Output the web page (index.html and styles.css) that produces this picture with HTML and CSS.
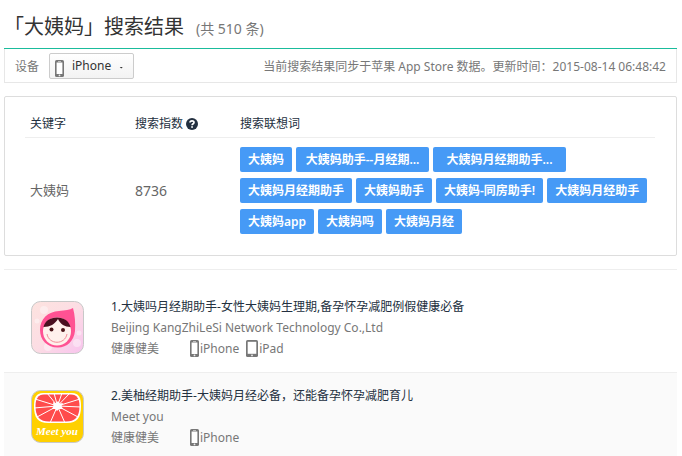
FILE: index.html
```html
<!DOCTYPE html>
<html lang="zh-CN">
<head>
    <meta charset="utf-8">
    <title>大姨妈 搜索结果</title>
    <link rel="stylesheet" href="styles.css">
</head>
<body>
    <svg class="sprite">
        <symbol id="phone" viewBox="0 0 9 17">
            <rect width="9" height="17" rx="1.6" fill="#777"/>
            <rect x="1.6" y="2.5" width="5.8" height="11.5" fill="#fff"/>
            <rect x="3" y="1" width="3" height="0.7" fill="#ddd"/>
            <circle cx="4.5" cy="15.4" r="0.9" fill="#eee"/>
        </symbol>
        <symbol id="tablet" viewBox="0 0 12 17">
            <rect width="12" height="17" rx="1.6" fill="#777"/>
            <rect x="1.7" y="1.8" width="8.6" height="12" fill="#fff"/>
            <circle cx="6" cy="15.4" r="0.9" fill="#eee"/>
        </symbol>
    </svg>

    <h1 class="page-title">「大姨妈」搜索结果<small>(共 510 条)</small></h1>

    <div class="toolbar">
        <span>设备</span>
        <button class="device-btn" type="button">
            <svg class="icon-phone"><use href="#phone"/></svg>
            iPhone
            <i class="caret"></i>
        </button>
        <span class="updated">当前搜索结果同步于苹果 App Store 数据。更新时间：2015-08-14 06:48:42</span>
    </div>

    <div class="panel">
        <table class="keywords">
            <thead>
                <tr>
                    <th class="col-key">关键字</th>
                    <th class="col-index">搜索指数
                        <svg class="icon-help" viewBox="0 0 12 12">
                            <circle cx="6" cy="6" r="6" fill="#233040"/>
                            <path d="M4 4.5C4.1 2.3 8 2.3 8 4.4C8 5.8 6.1 5.7 6.1 7.3" fill="none" stroke="#fff" stroke-width="1.7"/>
                            <rect x="5.2" y="8.2" width="1.7" height="1.6" fill="#fff"/>
                        </svg>
                    </th>
                    <th>搜索联想词</th>
                </tr>
            </thead>
            <tbody>
                <tr>
                    <td>大姨妈</td>
                    <td class="index">8736</td>
                    <td>
                        <div class="tags">
                            <a class="tag" href="#">大姨妈</a>
                            <a class="tag tag-long" href="#">大姨妈助手--月经期...</a>
                            <a class="tag tag-long" href="#">大姨妈月经期助手...</a>
                            <a class="tag" href="#">大姨妈月经期助手</a>
                            <a class="tag" href="#">大姨妈助手</a>
                            <a class="tag" href="#">大姨妈-同房助手!</a>
                            <a class="tag" href="#">大姨妈月经助手</a>
                            <a class="tag" href="#">大姨妈app</a>
                            <a class="tag" href="#">大姨妈吗</a>
                            <a class="tag" href="#">大姨妈月经</a>
                        </div>
                    </td>
                </tr>
            </tbody>
        </table>
    </div>

    <div class="app-list">
        <div class="app">
            <svg class="app-icon" viewBox="0 0 53 53">
                <defs>
                    <linearGradient id="pink" x1="0" y1="0" x2="1" y2="1">
                        <stop offset="0" stop-color="#fde3df"/>
                        <stop offset="0.5" stop-color="#fcdde4"/>
                        <stop offset="1" stop-color="#f8c3ee"/>
                    </linearGradient>
                </defs>
                <rect x="0.5" y="0.5" width="52" height="52" rx="9" fill="url(#pink)" stroke="#c8c8c8"/>
                <g fill="#fff" opacity="0.4">
                    <circle cx="6" cy="20" r="2.5"/>
                    <circle cx="13" cy="9" r="4"/>
                    <circle cx="48" cy="32" r="2.5"/>
                    <circle cx="46" cy="42" r="4"/>
                    <circle cx="17" cy="46" r="4"/>
                </g>
                <path d="M42 7C44 14 44.500 22 44 30C43 40 36 46.500 27 46.500C16 46.500 9 39 9 29C9 18 17 10.500 28 10C34 9.500 39 9 42 7Z" fill="#ff5293"/>
                <circle cx="26" cy="30.500" r="14" fill="#fff1ec"/>
                <path d="M12.500 26C14 20 19 16.500 26 16.500C33 16.500 38 20 39.500 26C34 26 29 23 27 18C24 23 19 26 12.500 26Z" fill="#4a1020"/>
                <circle cx="20.500" cy="28.500" r="2" fill="#4a1518"/>
                <circle cx="32" cy="29" r="2" fill="#4a1518"/>
                <path d="M16 33C18 44 34 44 36 33" fill="none" stroke="#f28c98" stroke-width="1"/>
            </svg>
            <div class="app-info">
                <a class="app-name" href="#">1.大姨吗月经期助手-女性大姨妈生理期,备孕怀孕减肥例假健康必备</a>
                <span>Beijing KangZhiLeSi Network Technology Co.,Ltd</span>
                <div class="app-meta">
                    <span class="category">健康健美</span>
                    <span class="device"><svg class="icon-phone"><use href="#phone"/></svg>iPhone</span>
                    <span class="device"><svg class="icon-tablet"><use href="#tablet"/></svg>iPad</span>
                </div>
            </div>
        </div>
        <div class="app app-alt">
            <svg class="app-icon" viewBox="0 0 53 53">
                <rect x="0.5" y="0.5" width="52" height="52" rx="9" fill="#ffd000" stroke="#c8c8c8"/>
                <path d="M12 3H41C48 3 50 8 50 16C50 28 46 33 36 33H17C7 33 3 28 3 16C3 8 5 3 12 3Z" fill="#fff"/>
                <path d="M13 4.500H40C46 4.500 48.500 9 48.500 16C48.500 27 44 31.500 35 31.500H18C9 31.500 4.500 27 4.500 16C4.500 9 7 4.500 13 4.500Z" fill="#ff4c4c"/>
                <path d="M26.500 16L16 3M26.500 16L23 3M26.500 16L31 3M26.500 16L39 3M26.500 16L49 9M26.500 16L50 17M26.500 16L47 27M26.500 16L34 33M26.500 16L19 33M26.500 16L6 27M26.500 16L3 18M26.500 16L4 9" stroke="#fff" stroke-width="1"/>
                <path d="M22 12L25 13.500L27 11L29 13.500L32 13L30.500 16L32 19L28 19L26 21L24 19L21 19L22.500 16Z" fill="#fff"/>
                <text class="icon-text" x="26" y="45" text-anchor="middle">Meet you</text>
            </svg>
            <div class="app-info">
                <a class="app-name" href="#">2.美柚经期助手-大姨妈月经必备，还能备孕怀孕减肥育儿</a>
                <span>Meet you</span>
                <div class="app-meta">
                    <span class="category">健康健美</span>
                    <span class="device"><svg class="icon-phone"><use href="#phone"/></svg>iPhone</span>
                </div>
            </div>
        </div>
    </div>
</body>
</html>
```
FILE: styles.css
```css
body {
    margin: 0;
    padding: 6px 5px 0 4px;
    background: #fff;
    color: #777;
    font-family: "Noto Sans", "Noto Sans CJK SC", sans-serif;
    font-size: 12px;
    line-height: 21px;
}

a {
    text-decoration: none;
}

.sprite {
    display: none;
}

.page-title {
    margin: 0;
    color: #333;
    font-size: 20px;
    font-weight: 400;
    line-height: 42px;
    border-bottom: 1px solid #1abc9c;
}

.page-title small {
    margin-left: 12px;
    color: #777;
    font-size: 14px;
    line-height: 20px;
}

.toolbar {
    display: flex;
    align-items: center;
    padding: 4px 10px 3px;
    border: 1px solid #e7e7e7;
    border-top: 0;
}

.device-btn {
    display: flex;
    align-items: center;
    gap: 8px;
    margin-left: 10px;
    padding: 0 10px 1px 5px;
    border: 1px solid #ccc;
    border-radius: 2px;
    background: linear-gradient(#fff, #f3f3f3);
    color: #333;
    font: inherit;
    line-height: 23px;
}

.device-btn .icon-phone {
    margin-top: 5px;
}

.caret {
    width: 4px;
    height: 2px;
    margin-top: 4px;
    background: #333;
    clip-path: polygon(0 0, 100% 0, 50% 100%);
}

.updated {
    margin-left: auto;
}

.icon-phone {
    width: 9px;
    height: 17px;
}

.icon-tablet {
    width: 12px;
    height: 17px;
}

.icon-help {
    width: 12px;
    height: 12px;
    vertical-align: -2px;
}

.panel {
    margin-top: 13px;
    padding: 16px 21px 16px 20px;
    border: 1px solid #ddd;
    border-radius: 2px;
}

.keywords {
    width: 100%;
    border-collapse: collapse;
    table-layout: fixed;
}

.keywords th {
    padding: 0 0 3px 5px;
    border-bottom: 1px solid #eee;
    color: #233040;
    font-weight: 400;
    text-align: left;
}

.keywords td {
    padding: 9px 0 5px 5px;
    color: #666;
    font-size: 13px;
}

.keywords .index {
    font-size: 14px;
}

.col-key,
.col-index {
    width: 100px;
}

.tags {
    display: flex;
    flex-wrap: wrap;
    gap: 6px 4px;
}

.tag {
    padding: 0 8px;
    border-radius: 2px;
    background: #469af6;
    color: #fff;
    font-size: 12px;
    font-weight: 600;
    line-height: 25px;
}

.tag-long {
    box-sizing: border-box;
    width: 133px;
    padding: 0;
    text-align: center;
}

.app-list {
    margin-top: 13px;
    padding-top: 14px;
    border-top: 1px solid #eee;
}

.app {
    display: flex;
    gap: 27px;
    padding: 12px 27px 13px;
}

.app-alt {
    border-top: 1px solid #eee;
    background: #fafafa;
}

.app-icon {
    flex: none;
    width: 53px;
    height: 53px;
    margin-top: 5px;
}

.icon-text {
    fill: #fff;
    font: italic bold 11px "Liberation Serif", serif;
}

.app-info {
    display: flex;
    flex-direction: column;
}

.app-name {
    color: #233040;
}

.app-meta {
    display: flex;
    gap: 7px;
}

.category {
    width: 72px;
}

.device {
    display: flex;
    align-items: center;
    gap: 1px;
}
```
